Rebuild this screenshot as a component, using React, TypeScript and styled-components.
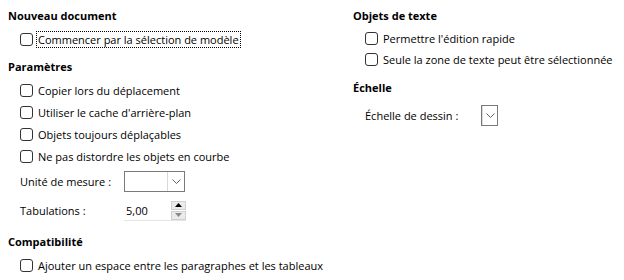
import styled, { createGlobalStyle } from "styled-components";

const Global = createGlobalStyle`
  html, body { margin: 0; padding: 0; background: #fff; }
  body {
    font-family: "Open Sans", "Noto Sans", "Liberation Sans", sans-serif;
    font-size: 11px;
    color: #000;
  }
`;

const Page = styled.div`
  width: 624px;
  height: 280px;
  display: grid;
  grid-template-columns: 345px 1fr;
  padding: 7px 0 0 8px;
  box-sizing: border-box;
  overflow: hidden;
`;

const Column = styled.div`
  display: flex;
  flex-direction: column;
`;

const Section = styled.div<{ $gap?: number }>`
  display: flex;
  flex-direction: column;
  margin-bottom: ${(p) => p.$gap ?? 8}px;
`;

const Title = styled.div`
  font-weight: 700;
  height: 18px;
  line-height: 18px;
  margin-bottom: 3px;
`;

const CheckRow = styled.label<{ $h?: number }>`
  display: flex;
  align-items: center;
  height: ${(p) => p.$h ?? 22}px;
  padding-left: 12px;
  white-space: nowrap;
`;

const Box = styled.span`
  width: 13px;
  height: 13px;
  box-sizing: border-box;
  border: 1px solid #333;
  border-radius: 3px;
  background: #fff;
  margin-right: 4px;
  flex-shrink: 0;
`;

const Caption = styled.span<{ $focus?: boolean }>`
  padding: 0 1px;
  outline: ${(p) => (p.$focus ? "1px dotted #000" : "none")};
  line-height: 15px;
`;

const FieldRow = styled.div<{ $top?: number }>`
  display: flex;
  align-items: center;
  height: 29px;
  margin-top: ${(p) => p.$top ?? 0}px;
  padding-left: 12px;
  white-space: nowrap;
`;

const FieldLabel = styled.span<{ $w: number }>`
  width: ${(p) => p.$w}px;
  flex-shrink: 0;
`;

const Combo = styled.div<{ $w: number }>`
  width: ${(p) => p.$w}px;
  height: 21px;
  box-sizing: border-box;
  border: 1px solid #7a7a7a;
  background: #fff;
  display: flex;
  justify-content: flex-end;
`;

const ComboButton = styled.div`
  width: 16px;
  border-left: 1px solid #d9d9d9;
  display: flex;
  align-items: center;
  justify-content: center;
`;

const Spin = styled.div`
  width: 62px;
  height: 21px;
  box-sizing: border-box;
  border-bottom: 1px solid #e5e5e5;
  background: #fff;
  display: flex;
  align-items: center;
  justify-content: space-between;
  padding-left: 2px;
`;

const SpinButtons = styled.div`
  width: 15px;
  height: 19px;
  display: flex;
  flex-direction: column;
  gap: 1px;
`;

const SpinButton = styled.div`
  flex: 1;
  background: #ebebeb;
  border: 1px solid #d0d0d0;
  box-sizing: border-box;
  display: flex;
  align-items: center;
  justify-content: center;
`;

const Chevron = () => (
  <svg width="9" height="6" viewBox="0 0 9 6">
    <path d="M0.5 0.5 L4.5 4.5 L8.5 0.5" fill="none" stroke="#606060" strokeWidth="1" />
  </svg>
);

const Tri = ({ up, color }: { up: boolean; color: string }) => (
  <svg width="7" height="4" viewBox="0 0 7 4">
    <path d={up ? "M0 4 L3.5 0 L7 4 Z" : "M0 0 L3.5 4 L7 0 Z"} fill={color} />
  </svg>
);

const Check = ({ text, focus, h }: { text: string; focus?: boolean; h?: number }) => (
  <CheckRow $h={h}>
    <Box />
    <Caption $focus={focus}>{text}</Caption>
  </CheckRow>
);

export default function App() {
  return (
    <>
      <Global />
      <Page>
        <Column>
          <Section $gap={8}>
            <Title>Nouveau document</Title>
            <Check text="Commencer par la sélection de modèle" focus />
          </Section>
          <Section $gap={8}>
            <Title>Paramètres</Title>
            <Check text="Copier lors du déplacement" />
            <Check text="Utiliser le cache d'arrière-plan" />
            <Check text="Objets toujours déplaçables" />
            <Check text="Ne pas distordre les objets en courbe" />
            <FieldRow>
              <FieldLabel $w={104}>Unité de mesure :</FieldLabel>
              <Combo $w={61}>
                <ComboButton>
                  <Chevron />
                </ComboButton>
              </Combo>
            </FieldRow>
            <FieldRow>
              <FieldLabel $w={104}>Tabulations :</FieldLabel>
              <Spin>
                <span>5,00</span>
                <SpinButtons>
                  <SpinButton>
                    <Tri up color="#000" />
                  </SpinButton>
                  <SpinButton>
                    <Tri up={false} color="#8a8a8a" />
                  </SpinButton>
                </SpinButtons>
              </Spin>
            </FieldRow>
          </Section>
          <Section>
            <Title>Compatibilité</Title>
            <Check text="Ajouter un espace entre les paragraphes et les tableaux" />
          </Section>
        </Column>
        <Column>
          <Section $gap={9}>
            <Title>Objets de texte</Title>
            <Check text="Permettre l'édition rapide" h={21} />
            <Check text="Seule la zone de texte peut être sélectionnée" h={21} />
          </Section>
          <Section>
            <Title>Échelle</Title>
            <FieldRow $top={1}>
              <FieldLabel $w={116}>Échelle de dessin :</FieldLabel>
              <Combo $w={17}>
                <ComboButton>
                  <Chevron />
                </ComboButton>
              </Combo>
            </FieldRow>
          </Section>
        </Column>
      </Page>
    </>
  );
}
